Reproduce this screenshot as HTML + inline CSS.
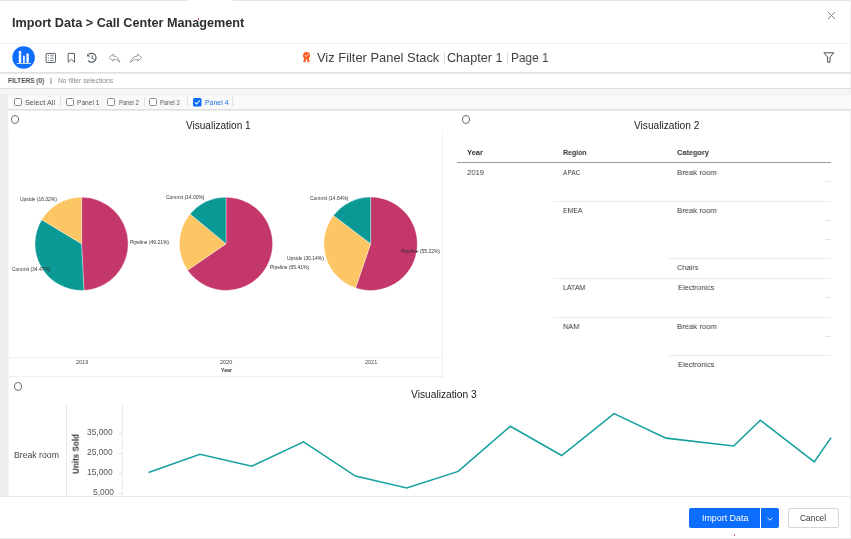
<!DOCTYPE html>
<html><head><meta charset="utf-8"><style>
html,body{margin:0;padding:0;width:851px;height:539px;overflow:hidden;background:#fff}
.r{position:absolute}
.t{position:absolute;will-change:transform;font-family:"Liberation Sans",sans-serif;white-space:nowrap;line-height:1.15}
</style></head><body>
<div class="r" style="left:0;top:0;width:188px;height:1px;background:#e2e5e9"></div><div class="r" style="left:233px;top:0;width:618px;height:1px;background:#e2e5e9"></div><div class="r" style="left:850px;top:0;width:1px;height:539px;background:#f1f2f4"></div><div class="t" style="left:12.40px;top:16.14px;font-size:12.65px;font-weight:bold;color:#2e2e2e;transform:scaleX(0.9982);transform-origin:0 0;">Import Data &gt; Call Center Management</div><svg class="r" style="left:826px;top:11px" width="11" height="10" viewBox="0 0 11 10"><path d="M2,1 L9,8 M9,1 L2,8" stroke="#7a7a7a" stroke-width="0.9" fill="none"/></svg><div class="r" style="left:0;top:43px;width:851px;height:1px;background:#eff0f2"></div><div class="r" style="left:0;top:71.6px;width:851px;height:2px;background:linear-gradient(#dcdcdc,#ededed)"></div><svg class="r" style="left:0;top:0" width="851" height="80" viewBox="0 0 851 80"><circle cx="23.6" cy="57.5" r="11.25" fill="#0d6efd"/><g fill="#fff"><rect x="18.8" y="51" width="2.4" height="11.7" rx="0.5"/><rect x="23" y="55.7" width="1.8" height="7" rx="0.3"/><rect x="26.4" y="53.6" width="2.4" height="9.1" rx="0.4"/><rect x="16.8" y="63.2" width="14.2" height="0.8"/></g><g fill="#6ea6ff"><rect x="18.8" y="53.9" width="2.4" height="0.6"/><rect x="23" y="57.3" width="1.8" height="0.6"/><rect x="23" y="60.2" width="1.8" height="0.6"/><rect x="27.2" y="56.6" width="0.8" height="0.8"/></g><rect x="46.1" y="53.4" width="9.4" height="9.1" rx="0.6" fill="none" stroke="#5b636c" stroke-width="1"/><g fill="#5b636c"><rect x="48.1" y="55" width="0.8" height="0.9"/><rect x="48.1" y="57.7" width="0.8" height="0.8"/><rect x="48.1" y="60" width="0.8" height="0.8"/><rect x="50.3" y="54.8" width="3.5" height="1.5" fill="#9aa0a6"/><rect x="50.3" y="57.7" width="3.5" height="0.8"/><rect x="50.3" y="60" width="3.5" height="0.8"/></g><path d="M68.2,53.4 H74.5 V62.3 L71.35,59.3 L68.2,62.3 Z" fill="none" stroke="#5b636c" stroke-width="1" stroke-linejoin="miter"/><path d="M88.6,54.3 A4.5,4.5 0 1 1 88.1,60.6" fill="none" stroke="#3f4750" stroke-width="1.05"/><path d="M87.2,53.7 L87.2,56.5 L90,56.5 Z" fill="#3f4750"/><path d="M92.2,55.4 L92.3,58.4 L94.3,59.7" fill="none" stroke="#3f4750" stroke-width="0.95"/><path d="M113.3,54 L109.1,57.6 L113.3,61.2 V59.3 C116,59.2 118.5,60.2 119.6,62.3 C119.3,58.8 116.8,56.2 113.3,56 Z" fill="none" stroke="#80868d" stroke-width="0.8" stroke-linejoin="round"/><path d="M137.5,54 L141.7,57.6 L137.5,61.2 V59.3 C134.8,59.2 132.3,60.2 130.5,62.5 C131,58.8 134,56.2 137.5,56 Z" fill="none" stroke="#80868d" stroke-width="0.8" stroke-linejoin="round"/></svg><svg class="r" style="left:0;top:0" width="851" height="80" viewBox="0 0 851 80"><g fill="#ff5b1e"><circle cx="306.5" cy="55.4" r="3.5"/><path d="M304.3,58 L303.2,62 L304.4,61.7 L305.3,62.7 L306.3,58.7 Z"/><path d="M306.7,58.7 L307.7,62.7 L308.6,61.7 L309.8,62 L308.7,58 Z"/></g><path d="M304.9,55.1 L306.2,56.5 L308.5,54" fill="none" stroke="#fff" stroke-width="0.8"/></svg><div class="t" style="left:317.20px;top:50.81px;font-size:12.9px;font-weight:normal;color:#3c4043;transform:scaleX(0.9982);transform-origin:0 0;">Viz Filter Panel Stack</div><div class="r" style="left:444px;top:51.5px;width:1px;height:12px;background:#dcdcdc"></div><div class="t" style="left:447.00px;top:51.09px;font-size:12.6px;font-weight:normal;color:#3c4043;transform:scaleX(1.0016);transform-origin:0 0;">Chapter 1</div><div class="r" style="left:507px;top:51.5px;width:1px;height:12px;background:#dcdcdc"></div><div class="t" style="left:510.90px;top:51.37px;font-size:12.3px;font-weight:normal;color:#3c4043;transform:scaleX(0.9618);transform-origin:0 0;">Page 1</div><svg class="r" style="left:823px;top:52px" width="12" height="11" viewBox="0 0 12 11"><path d="M0.8,0.8 H10.8 L7,5 V10.2 H4.6 V5 Z" fill="none" stroke="#4a4f55" stroke-width="1" stroke-linejoin="round"/></svg><div class="t" style="left:7.80px;top:76.86px;font-size:7.1px;font-weight:bold;color:#4b4f54;transform:scaleX(0.9138);transform-origin:0 0;">FILTERS (0)</div><div class="r" style="left:50.2px;top:78.2px;width:1.6px;height:5.4px;background:#c4c4c4"></div><div class="t" style="left:57.90px;top:76.68px;font-size:6.75px;font-weight:normal;color:#8a8a8a;transform:scaleX(0.9955);transform-origin:0 0;">No filter selections</div><div class="r" style="left:0;top:88px;width:851px;height:1px;background:#dedede"></div><div class="r" style="left:0;top:89px;width:850px;height:408px;background:#ededed"></div><div class="r" style="left:0;top:89px;width:850px;height:5.3px;background:#f5f5f5"></div><div class="r" style="left:7.6px;top:94.3px;width:843px;height:14.8px;background:#f9f9f9;border-top:1px solid #f1f1f1;box-sizing:border-box"></div><div class="r" style="left:7.6px;top:109.1px;width:843px;height:1.9px;background:linear-gradient(#dcdcdc,#f0f0f0)"></div><div class="r" style="left:13.5px;top:98px;width:8px;height:8px;border:1px solid #8c8c8c;border-radius:1.5px;background:#fff;box-sizing:border-box"></div><div class="t" style="left:25.10px;top:99.27px;font-size:7.3px;font-weight:normal;color:#555;transform:scaleX(0.9987);transform-origin:0 0;">Select All</div><div class="r" style="left:60.3px;top:97px;width:1px;height:9px;background:#e0e0e0"></div><div class="r" style="left:65.6px;top:98px;width:8px;height:8px;border:1px solid #8c8c8c;border-radius:1.5px;background:#fff;box-sizing:border-box"></div><div class="t" style="left:76.90px;top:98.97px;font-size:6.65px;font-weight:normal;color:#555;transform:scaleX(0.9981);transform-origin:0 0;">Panel 1</div><div class="r" style="left:107.3px;top:98px;width:8px;height:8px;border:1px solid #8c8c8c;border-radius:1.5px;background:#fff;box-sizing:border-box"></div><div class="t" style="left:118.90px;top:99.21px;font-size:6.5px;font-weight:normal;color:#555;transform:scaleX(0.894);transform-origin:0 0;">Panel 2</div><div class="r" style="left:144.2px;top:97px;width:1px;height:9px;background:#e0e0e0"></div><div class="r" style="left:149.2px;top:98px;width:8px;height:8px;border:1px solid #8c8c8c;border-radius:1.5px;background:#fff;box-sizing:border-box"></div><div class="t" style="left:159.50px;top:99.21px;font-size:6.5px;font-weight:normal;color:#555;transform:scaleX(0.885);transform-origin:0 0;">Panel 3</div><div class="r" style="left:187.3px;top:97px;width:1px;height:9px;background:#e0e0e0"></div><svg class="r" style="left:192.8px;top:97.6px" width="9" height="9" viewBox="0 0 9 9"><rect x="0" y="0" width="8.5" height="8.5" rx="1.5" fill="#0d6efd"/><path d="M1.9,4.3 L3.6,6 L6.8,2.5" fill="none" stroke="#fff" stroke-width="1.1"/></svg><div class="t" style="left:204.80px;top:98.74px;font-size:6.9px;font-weight:normal;color:#1a73e8;transform:scaleX(1.0047);transform-origin:0 0;">Panel 4</div><div class="r" style="left:232.2px;top:97px;width:1px;height:9px;background:#e0e0e0"></div><div class="r" style="left:7.7px;top:111px;width:842.3px;height:385.5px;background:#fff"></div><div class="r" style="left:7.8px;top:131.7px;width:1.1px;height:364px;background:#f6f6f6"></div><div class="r" style="left:442.2px;top:131.7px;width:1px;height:244.5px;background:#f0f0f0"></div><div class="r" style="left:8.9px;top:357px;width:433.3px;height:1px;background:#efefef"></div><div class="r" style="left:8.9px;top:376px;width:434px;height:1px;background:#eeeeee"></div><div class="r" style="left:10.6px;top:115.15px;width:8.5px;height:8.5px;border:1px solid #6f6f6f;border-radius:50%;box-sizing:border-box;background:#fff"></div><div class="r" style="left:461.75px;top:115.25px;width:8.5px;height:8.5px;border:1px solid #6f6f6f;border-radius:50%;box-sizing:border-box;background:#fff"></div><div class="r" style="left:13.850000000000001px;top:382.15px;width:8.5px;height:8.5px;border:1px solid #6f6f6f;border-radius:50%;box-sizing:border-box;background:#fff"></div><div class="t" style="left:185.70px;top:120.23px;font-size:10.06px;font-weight:normal;color:#222;transform:scaleX(1.0002);transform-origin:0 0;">Visualization 1</div><div class="t" style="left:633.90px;top:119.89px;font-size:10.1px;font-weight:normal;color:#222;transform:scaleX(1.007);transform-origin:0 0;">Visualization 2</div><div class="t" style="left:410.80px;top:389.05px;font-size:10.15px;font-weight:normal;color:#222;transform:scaleX(1.0097);transform-origin:0 0;">Visualization 3</div><svg class="r" style="left:0;top:0" width="851" height="539" viewBox="0 0 851 539"><path d="M81.60,243.80 L81.60,197.20 A46.6,46.6 0 0 1 83.91,290.34 Z" fill="#c4376a" stroke="#fff" stroke-width="0.35"/><path d="M81.60,243.80 L83.91,290.34 A46.6,46.6 0 0 1 41.76,219.63 Z" fill="#0b9995" stroke="#fff" stroke-width="0.35"/><path d="M81.60,243.80 L41.76,219.63 A46.6,46.6 0 0 1 81.60,197.20 Z" fill="#fdc664" stroke="#fff" stroke-width="0.35"/><path d="M226.00,243.80 L226.00,197.20 A46.6,46.6 0 1 1 187.61,270.21 Z" fill="#c4376a" stroke="#fff" stroke-width="0.35"/><path d="M226.00,243.80 L187.61,270.21 A46.6,46.6 0 0 1 190.09,214.10 Z" fill="#fdc664" stroke="#fff" stroke-width="0.35"/><path d="M226.00,243.80 L190.09,214.10 A46.6,46.6 0 0 1 226.00,197.20 Z" fill="#0b9995" stroke="#fff" stroke-width="0.35"/><path d="M370.60,243.80 L370.60,197.10 A46.7,46.7 0 1 1 355.56,288.01 Z" fill="#c4376a" stroke="#fff" stroke-width="0.35"/><path d="M370.60,243.80 L355.56,288.01 A46.7,46.7 0 0 1 333.45,215.50 Z" fill="#fdc664" stroke="#fff" stroke-width="0.35"/><path d="M370.60,243.80 L333.45,215.50 A46.7,46.7 0 0 1 370.60,197.10 Z" fill="#0b9995" stroke="#fff" stroke-width="0.35"/></svg><div class="t" style="left:19.90px;top:197.04px;font-size:4.95px;font-weight:normal;color:#333;">Upside (16.32%)</div><div class="t" style="left:130.20px;top:240.04px;font-size:4.95px;font-weight:normal;color:#333;">Pipeline (49.21%)</div><div class="t" style="left:11.80px;top:267.44px;font-size:4.95px;font-weight:normal;color:#333;">Commit (34.47%)</div><div class="t" style="left:166.00px;top:195.24px;font-size:4.95px;font-weight:normal;color:#333;">Commit (14.00%)</div><div class="t" style="left:269.60px;top:265.14px;font-size:4.95px;font-weight:normal;color:#333;">Pipeline (65.41%)</div><div class="t" style="left:309.80px;top:195.64px;font-size:4.95px;font-weight:normal;color:#333;">Commit (14.64%)</div><div class="t" style="left:401.20px;top:249.24px;font-size:4.95px;font-weight:normal;color:#333;">Pipeline (55.22%)</div><div class="t" style="left:287.20px;top:256.14px;font-size:4.95px;font-weight:normal;color:#333;">Upside (30.14%)</div><div class="t" style="left:75.50px;top:358.73px;font-size:5.5px;font-weight:normal;color:#444;">2019</div><div class="t" style="left:220.20px;top:358.73px;font-size:5.5px;font-weight:normal;color:#444;">2020</div><div class="t" style="left:365.00px;top:358.73px;font-size:5.5px;font-weight:normal;color:#444;">2021</div><div class="t" style="left:220.90px;top:368.11px;font-size:5.2px;font-weight:bold;color:#333;">Year</div><div class="t" style="left:467.10px;top:148.90px;font-size:7.6px;font-weight:bold;color:#333;transform:scaleX(0.983);transform-origin:0 0;">Year</div><div class="t" style="left:562.60px;top:148.90px;font-size:7.6px;font-weight:bold;color:#333;transform:scaleX(0.916);transform-origin:0 0;">Region</div><div class="t" style="left:677.30px;top:148.90px;font-size:7.6px;font-weight:bold;color:#333;transform:scaleX(0.9683);transform-origin:0 0;">Category</div><div class="r" style="left:457.3px;top:161.8px;width:373.7px;height:1px;background:#9c9c9c"></div><div class="t" style="left:467.10px;top:167.54px;font-size:8.1px;font-weight:normal;color:#3a3a3a;transform:scaleX(0.9377);transform-origin:0 0;">2019</div><div class="t" style="left:562.60px;top:167.54px;font-size:8.1px;font-weight:normal;color:#3a3a3a;transform:scaleX(0.8106);transform-origin:0 0;">APAC</div><div class="t" style="left:677.40px;top:167.54px;font-size:8.1px;font-weight:normal;color:#3a3a3a;transform:scaleX(0.9552);transform-origin:0 0;">Break room</div><div class="t" style="left:562.50px;top:205.84px;font-size:8.1px;font-weight:normal;color:#3a3a3a;transform:scaleX(0.8448);transform-origin:0 0;">EMEA</div><div class="t" style="left:677.40px;top:205.84px;font-size:8.1px;font-weight:normal;color:#3a3a3a;transform:scaleX(0.9552);transform-origin:0 0;">Break room</div><div class="t" style="left:677.40px;top:263.44px;font-size:8.1px;font-weight:normal;color:#3a3a3a;transform:scaleX(0.9227);transform-origin:0 0;">Chairs</div><div class="t" style="left:562.70px;top:283.04px;font-size:8.1px;font-weight:normal;color:#3a3a3a;transform:scaleX(0.8644);transform-origin:0 0;">LATAM</div><div class="t" style="left:677.50px;top:283.04px;font-size:8.1px;font-weight:normal;color:#3a3a3a;transform:scaleX(0.919);transform-origin:0 0;">Electronics</div><div class="t" style="left:562.70px;top:321.54px;font-size:8.1px;font-weight:normal;color:#3a3a3a;transform:scaleX(0.912);transform-origin:0 0;">NAM</div><div class="t" style="left:677.40px;top:321.54px;font-size:8.1px;font-weight:normal;color:#3a3a3a;transform:scaleX(0.9552);transform-origin:0 0;">Break room</div><div class="t" style="left:677.50px;top:359.84px;font-size:8.1px;font-weight:normal;color:#3a3a3a;transform:scaleX(0.919);transform-origin:0 0;">Electronics</div><div class="r" style="left:552.8px;top:201px;width:278.20000000000005px;height:1px;background:#ececec"></div><div class="r" style="left:668px;top:258.2px;width:163px;height:1px;background:#ececec"></div><div class="r" style="left:552.8px;top:278px;width:278.20000000000005px;height:1px;background:#ececec"></div><div class="r" style="left:552.8px;top:316.5px;width:278.20000000000005px;height:1px;background:#ececec"></div><div class="r" style="left:668px;top:355.2px;width:163px;height:1px;background:#ececec"></div><div class="r" style="left:824.5px;top:181.2px;width:6.5px;height:1px;background:#e6e6e6"></div><div class="r" style="left:824.5px;top:220.2px;width:6.5px;height:1px;background:#e6e6e6"></div><div class="r" style="left:824.5px;top:239px;width:6.5px;height:1px;background:#e6e6e6"></div><div class="r" style="left:824.5px;top:297.2px;width:6.5px;height:1px;background:#e6e6e6"></div><div class="r" style="left:824.5px;top:336px;width:6.5px;height:1px;background:#e6e6e6"></div><div class="t" style="left:14.30px;top:450.38px;font-size:8.7px;font-weight:normal;color:#444;transform:scaleX(0.9982);transform-origin:0 0;">Break room</div><div class="r" style="left:66.4px;top:404.7px;width:1px;height:92px;background:#e8e8e8"></div><div class="r" style="left:122.2px;top:404.7px;width:1px;height:92px;background:#eaeaea"></div><div class="t" style="left:75.65px;top:453.9px;font-size:9.3px;font-weight:bold;color:#333;transform:translate(-50%,-50%) rotate(-90deg) scaleX(0.87);">Units Sold</div><div class="t" style="left:87.00px;top:427.86px;font-size:8.4px;font-weight:normal;color:#555;">35,000</div><div class="r" style="left:119.2px;top:433.4px;width:2.6px;height:1px;background:#ddd"></div><div class="t" style="left:87.00px;top:447.86px;font-size:8.4px;font-weight:normal;color:#555;">25,000</div><div class="r" style="left:119.2px;top:453.4px;width:2.6px;height:1px;background:#ddd"></div><div class="t" style="left:87.00px;top:467.56px;font-size:8.4px;font-weight:normal;color:#555;">15,000</div><div class="r" style="left:119.2px;top:473px;width:2.6px;height:1px;background:#ddd"></div><div class="t" style="left:92.50px;top:487.56px;font-size:8.4px;font-weight:normal;color:#555;">5,000</div><div class="r" style="left:119.2px;top:493px;width:2.6px;height:1px;background:#ddd"></div><svg class="r" style="left:0;top:0" width="851" height="539" viewBox="0 0 851 539"><polyline transform="translate(0,0.4)" points="148.5,472 199.9,453.9 251.8,465.8 303.6,441.5 355.4,475.7 406.8,487.6 458.2,471 510.3,425.9 561.7,455.1 614,413.2 666,437.7 733.7,445.6 760.3,419.8 814.3,461.5 831,437.2" fill="none" stroke="#17a0a0" stroke-width="1.6" stroke-linejoin="miter"/></svg><div class="r" style="left:0;top:496.5px;width:850px;height:42px;background:#fff"></div><div class="r" style="left:0;top:496.3px;width:850px;height:1px;background:#e9e9e9"></div><div class="r" style="left:688.7px;top:508.1px;width:71.5px;height:19.6px;background:#0d6efd;border-radius:2px 0 0 2px"></div><div class="r" style="left:760.7px;top:508.1px;width:18.7px;height:19.6px;background:#0d6efd;border-radius:0 2px 2px 0"></div><div class="t" style="left:701.60px;top:512.80px;font-size:8.9px;font-weight:normal;color:#fff;transform:scaleX(0.9968);transform-origin:0 0;">Import Data</div><svg class="r" style="left:766px;top:515.5px" width="8" height="6" viewBox="0 0 8 6"><path d="M1.5,1.8 L4,4.2 L6.5,1.8" fill="none" stroke="#fff" stroke-width="0.9"/></svg><div class="r" style="left:788px;top:508.2px;width:50.6px;height:19.4px;border:1px solid #d6d6d6;border-radius:2px;box-sizing:border-box;background:#fff"></div><div class="t" style="left:799.80px;top:513.76px;font-size:8.4px;font-weight:normal;color:#333;transform:scaleX(1.0013);transform-origin:0 0;">Cancel</div><div class="r" style="left:733.5px;top:534px;width:1px;height:2px;background:#f26060"></div><div class="r" style="left:198px;top:18.4px;width:1px;height:2px;background:#f03030"></div><div class="r" style="left:0;top:538px;width:851px;height:1px;background:#e8e8e8"></div>
</body></html>
